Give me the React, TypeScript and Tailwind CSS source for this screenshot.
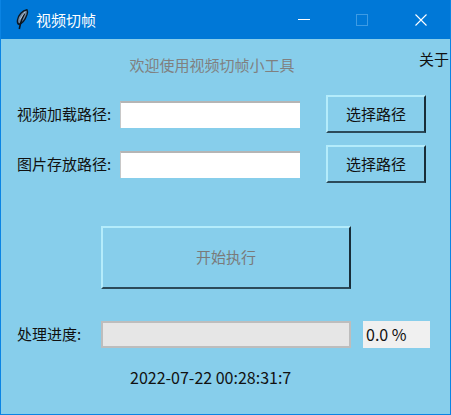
const font = "[font-family:'Noto_Sans_CJK_SC','Noto_Sans',sans-serif]"

function Feather() {
  return (
    <svg width="14" height="22" viewBox="0 0 14 22" className="mr-[6px] shrink-0">
      <path d="M11 .8C6.500 1.600 2.300 6 1.500 11c-.3 2 .1 3.800 1.400 4.400C6 14.400 9.500 10 11 5.500c.6-2 .7-3.600 0-4.700Z" fill="#7189a3" stroke="#0c1824" strokeWidth="1.400" />
      <path d="M8.500 4.500C7 7.500 5.500 11 4.500 14.500L3.300 20" fill="none" stroke="#0a121b" strokeWidth="1.600" />
      <path d="M9 2.800 4 10.500" fill="none" stroke="#c6d4e2" strokeWidth="0.800" />
    </svg>
  )
}

function RaisedButton({ label, className, text = 'text-[#111]' }: { label: string; className: string; text?: string }) {
  return (
    <div
      className={`flex items-center justify-center border-2 border-t-[#b4ecfb] border-l-[#b4ecfb] border-r-[#182d38] border-b-[#2c4a59] pb-[1px] ${text} ${className}`}
    >
      {label}
    </div>
  )
}

function PathRow({ label, className }: { label: string; className: string }) {
  return (
    <div className={`flex h-[38px] items-center ${className}`}>
      <div className="w-[119px] pl-[16px] text-[#111] whitespace-nowrap">{label}</div>
      <div className="h-[27px] w-[180px] border-t-2 border-l border-t-[#b5b5b5] border-l-[#c8c8c8] bg-white" />
      <RaisedButton label="选择路径" className="ml-[26px] h-[38px] w-[100px]" />
    </div>
  )
}

export default function App() {
  return (
    <div className={`${font} flex h-[415px] w-[451px] flex-col overflow-hidden border-x border-b border-[#0a84e4] bg-[#87ceeb] text-[15px] leading-[20px]`}>
      {/* Title bar */}
      <div className="-mx-px flex h-[39px] shrink-0 items-center bg-[#0078d7] pl-[16px] text-white">
        <Feather />
        <span>视频切帧</span>
        <div className="ml-auto flex items-center">
          <div className="h-px w-[12px] bg-white" />
          <div className="ml-[46px] h-[12px] w-[12px] border border-[#3d9be4]" />
          <svg width="12" height="12" viewBox="0 0 12 12" className="ml-[47px] mr-[24px]">
            <path d="M.5.5l11 11M11.500.5l-11 11" stroke="#fff" strokeWidth="1.100" fill="none" />
          </svg>
        </div>
      </div>

      {/* Heading */}
      <div className="flex h-[56px] shrink-0">
        <div className="w-[422px] pt-[16px] text-center text-[#808080]">欢迎使用视频切帧小工具</div>
        <div className="-ml-[4px] pt-[10px] text-[#111] whitespace-nowrap">关于</div>
      </div>

      <PathRow label="视频加载路径:" className="" />
      <PathRow label="图片存放路径:" className="mt-[12px]" />

      <RaisedButton label="开始执行" text="text-[#7a7a7a]" className="ml-[100px] mt-[43px] h-[63px] w-[250px]" />

      {/* Progress */}
      <div className="mt-[31px] flex items-center">
        <div className="w-[100px] pl-[16px] text-[#111] whitespace-nowrap">处理进度:</div>
        <div className="h-[27px] w-[250px] border-2 border-[#bdbdbd] bg-[#e6e6e6]" />
        <div className="ml-[12px] mt-[1px] flex h-[27px] w-[67px] items-center bg-[#f0f0f0] pb-[1px] pl-[3px] text-[16px] text-[#111]">0.0 %</div>
      </div>

      <div className="mt-[19px] pl-[129px] text-[16px] text-[#111] whitespace-nowrap">2022-07-22 00:28:31:7</div>
    </div>
  )
}
